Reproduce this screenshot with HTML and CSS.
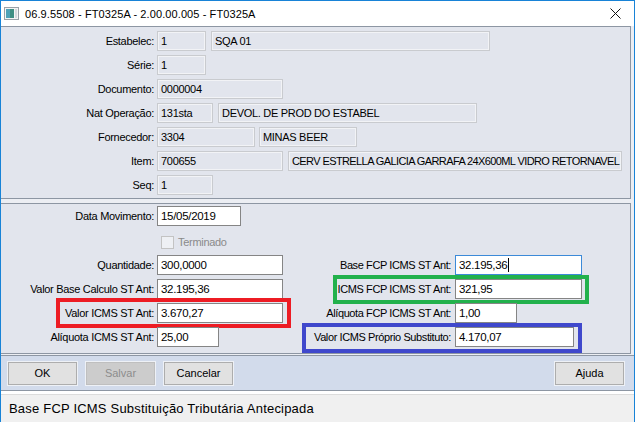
FILE: index.html
```html
<!DOCTYPE html>
<html lang="pt-BR">
<head>
  <meta charset="UTF-8">
  <title>FT0325A</title>
  <link rel="stylesheet" href="styles.css">
</head>
<body>
<div class="window">
  <div class="titlebar">
    <svg class="appicon" width="15" height="13" viewBox="0 0 15 13">
      <rect x="0.5" y="0.5" width="14" height="12" fill="#f4f4f4" stroke="#9aa1a8"/>
      <rect x="2" y="2" width="8" height="9" fill="#3f8f83"/>
      <rect x="2" y="2" width="4" height="9" fill="#4fa2b8"/>
      <rect x="11" y="2" width="2" height="9" fill="#d6dade"/>
    </svg>
    <span class="title">06.9.5508 - FT0325A - 2.00.00.005 - FT0325A</span>
    <svg class="close" width="11" height="11" viewBox="0 0 11 11">
      <path d="M0.5 0.5 L10.5 10.5 M10.5 0.5 L0.5 10.5" stroke="#111" stroke-width="1"/>
    </svg>
  </div>

  <div class="content">
    <div class="panel top">
      <div class="row">
        <label>Estabelec:</label>
        <span class="field ro" style="width:49px">1</span>
        <span class="field ro" style="width:279px">SQA 01</span>
      </div>
      <div class="row">
        <label>Série:</label>
        <span class="field ro" style="width:49px">1</span>
      </div>
      <div class="row">
        <label>Documento:</label>
        <span class="field ro" style="width:126px">0000004</span>
      </div>
      <div class="row">
        <label>Nat Operação:</label>
        <span class="field ro" style="width:56px">131sta</span>
        <span class="field ro" style="width:259px">DEVOL. DE PROD DO ESTABEL</span>
      </div>
      <div class="row tight">
        <label>Fornecedor:</label>
        <span class="field ro" style="width:98px">3304</span>
        <span class="field ro" style="width:98px">MINAS BEER</span>
      </div>
      <div class="row">
        <label>Item:</label>
        <span class="field ro" style="width:126px">700655</span>
        <span class="field ro long" style="width:334px">CERV ESTRELLA GALICIA GARRAFA 24X600ML VIDRO RETORNAVEL</span>
      </div>
      <div class="row">
        <label>Seq:</label>
        <span class="field ro" style="width:56px">1</span>
      </div>
    </div>

    <div class="panel bottom">
      <div class="row">
        <label>Data Movimento:</label>
        <span class="field ed" style="width:84px">15/05/2019</span>
      </div>
      <div class="row check">
        <span class="checkbox"></span>
        <span class="check-label">Terminado</span>
      </div>
      <div class="row">
        <div class="pair">
          <label>Quantidade:</label>
          <span class="field ed" style="width:126px">300,0000</span>
        </div>
        <div class="pair right">
          <label>Base FCP ICMS ST Ant:</label>
          <span class="field ed focus" style="width:127px">32.195,36<i class="caret"></i></span>
        </div>
      </div>
      <div class="row">
        <div class="pair">
          <label>Valor Base Calculo ST Ant:</label>
          <span class="field ed" style="width:126px">32.195,36</span>
        </div>
        <div class="pair right">
          <label>ICMS FCP ICMS ST Ant:</label>
          <span class="field ed" style="width:127px">321,95</span>
          <span class="mark green"></span>
        </div>
      </div>
      <div class="row">
        <div class="pair">
          <label>Valor ICMS ST Ant:</label>
          <span class="field ed" style="width:126px">3.670,27</span>
          <span class="mark red"></span>
        </div>
        <div class="pair right">
          <label>Alíquota FCP ICMS ST Ant:</label>
          <span class="field ed" style="width:62px">1,00</span>
        </div>
      </div>
      <div class="row">
        <div class="pair">
          <label>Alíquota ICMS ST Ant:</label>
          <span class="field ed" style="width:62px">25,00</span>
        </div>
        <div class="pair right">
          <label>Valor ICMS Próprio Substituto:</label>
          <span class="field ed" style="width:119px">4.170,07</span>
          <span class="mark blue"></span>
        </div>
      </div>
    </div>

    <div class="buttons">
      <button>OK</button>
      <button disabled>Salvar</button>
      <button>Cancelar</button>
      <button class="help">Ajuda</button>
    </div>
  </div>

  <div class="status">Base FCP ICMS Substituição Tributária Antecipada</div>
</div>
</body>
</html>
```

FILE: styles.css
```css
* {
  box-sizing: border-box;
}

body {
  margin: 0;
  background: #fff;
  font-family: "Liberation Sans", Arial, sans-serif;
  font-size: 11px;
  color: #000;
}

.window {
  width: 635px;
  height: 422px;
  border: 1px solid #1883d7;
  border-bottom: none;
  display: flex;
  flex-direction: column;
  background: #fff;
}

.titlebar {
  height: 25px;
  display: flex;
  align-items: center;
  background: #fff;
}

.appicon {
  margin-left: 3px;
  margin-right: 6px;
}

.title {
  font-size: 11px;
  letter-spacing: 0.1px;
}

.close {
  margin-left: auto;
  margin-right: 13px;
}

.content {
  background: #eceef3;
}

.panel {
  width: 630px;
  background: #e2e5ed;
  border: 1px solid #8d96a3;
  border-left: none;
}

.panel.top {
  padding: 4px 0 3px;
}

.panel.bottom {
  margin-top: 4px;
  padding: 2px 0 6px;
}

.row {
  display: flex;
  align-items: center;
  height: 20px;
  margin-top: 4px;
  letter-spacing: -0.3px;
}

.row:first-child {
  margin-top: 0;
}

.row label {
  width: 153px;
  margin-right: 3px;
  text-align: right;
  white-space: nowrap;
  flex: none;
}

.field {
  height: 20px;
  padding-left: 3px;
  display: flex;
  align-items: center;
  white-space: nowrap;
  overflow: hidden;
  flex: none;
  margin-right: 5px;
}

.row.tight .field {
  margin-right: 4px;
}

.field.ro {
  background: #e2e5ed;
  border: 1px solid #c9cbcf;
  box-shadow: inset 0 0 0 1px #f2f3f6;
}

.field.long {
  letter-spacing: -0.6px;
}

.field.ed {
  background: #fff;
  border: 1px solid #858585;
  font-size: 11.5px;
}

.field.focus {
  border-color: #3c8ad8;
}

.caret {
  display: inline-block;
  width: 1px;
  height: 14px;
  background: #000;
  margin-left: 1px;
}

.row.check {
  height: 21px;
  align-items: flex-end;
  padding-left: 158px;
  padding-bottom: 2px;
}

.checkbox {
  width: 13px;
  height: 13px;
  margin-left: 2px;
  border: 1px solid #c3c3c3;
  background: #eef0f4;
}

.check-label {
  margin-left: 4px;
  color: #8a8a8a;
  line-height: 13px;
}

.pair {
  position: relative;
  display: flex;
  align-items: center;
  width: 300px;
  flex: none;
}

.pair.right {
  width: auto;
}

.pair.right label {
  width: 150px;
  margin-right: 4px;
  display: flex;
  justify-content: flex-end;
  letter-spacing: -0.4px;
}

.mark {
  position: absolute;
  border: 4px solid;
}

.mark.red {
  border-color: #ed1c24;
  left: 55px;
  top: -5px;
  width: 235px;
  height: 30px;
}

.mark.green {
  border-color: #22b14c;
  left: 32px;
  top: -4px;
  width: 256px;
  height: 29px;
}

.mark.blue {
  border-color: #3f48cc;
  left: 1px;
  top: -4px;
  width: 280px;
  height: 30px;
}

.buttons {
  margin-top: 1px;
  height: 36px;
  display: flex;
  align-items: center;
  gap: 9px;
  padding: 0 10px 0 7px;
  background: #d2dbeb;
  border-top: 1px solid #8d96a3;
  border-bottom: 1px solid #8d96a3;
}

button {
  width: 69px;
  height: 23px;
  font-family: "Liberation Sans", Arial, sans-serif;
  font-size: 11px;
  color: #000;
  background: #e1e1e1;
  border: 1px solid #adadad;
  box-shadow: 0 0 0 1px #eef1f6;
  padding: 0;
}

button:disabled {
  background: #cccccc;
  border-color: #bfbfbf;
  color: #8d8d8d;
}

button.help {
  margin-left: auto;
}

.status {
  flex: 1;
  margin-top: 3px;
  border-top: 1px solid #dcdcdc;
  background: #f0f0f0;
  padding-left: 8px;
  display: flex;
  align-items: center;
  font-size: 13px;
  letter-spacing: 0.2px;
}
```
